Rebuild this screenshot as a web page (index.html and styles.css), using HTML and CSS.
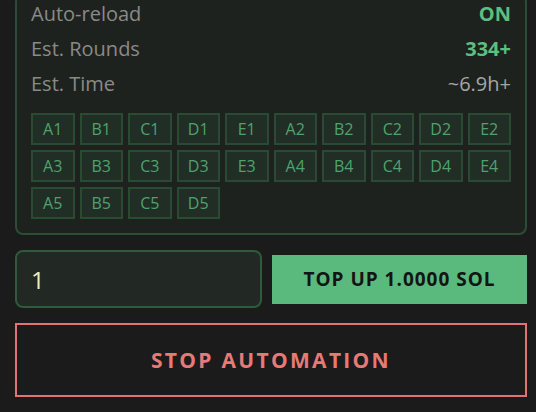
FILE: index.html
```html
<!DOCTYPE html>
<html>
<head>
<meta charset="utf-8">
<link rel="stylesheet" href="styles.css">
</head>
<body>
<div class="page">
  <section class="panel">
    <div class="row"><span class="label">Auto-reload</span><span class="value green">ON</span></div>
    <div class="row"><span class="label">Est. Rounds</span><span class="value green">334+</span></div>
    <div class="row"><span class="label">Est. Time</span><span class="value muted">~6.9h+</span></div>
    <div class="cells">
      <span class="cell">A1</span><span class="cell">B1</span><span class="cell">C1</span><span class="cell">D1</span><span class="cell">E1</span>
      <span class="cell">A2</span><span class="cell">B2</span><span class="cell">C2</span><span class="cell">D2</span><span class="cell">E2</span>
      <span class="cell">A3</span><span class="cell">B3</span><span class="cell">C3</span><span class="cell">D3</span><span class="cell">E3</span>
      <span class="cell">A4</span><span class="cell">B4</span><span class="cell">C4</span><span class="cell">D4</span><span class="cell">E4</span>
      <span class="cell">A5</span><span class="cell">B5</span><span class="cell">C5</span><span class="cell">D5</span>
    </div>
  </section>
  <div class="topup">
    <input class="amount" type="text" value="1">
    <button class="topup-btn">TOP UP 1.0000 SOL</button>
  </div>
  <button class="stop-btn">STOP AUTOMATION</button>
</div>
</body>
</html>
```
FILE: styles.css
```css
* { box-sizing: border-box; }
html, body {
  margin: 0;
  background: #1b1b1b;
  height: 100%;
  overflow: hidden;
}
body {
  font-family: "Open Sans", "Noto Sans", sans-serif;
}
.page {
  padding: 0 9px 0 15px;
}
.panel {
  margin-top: -6px;
  border: 2px solid #2c4c36;
  border-radius: 8px;
  background: #1e221f;
  padding: 0 14px 14px 14px;
}
.row {
  display: flex;
  justify-content: space-between;
  align-items: center;
  height: 35px;
  font-size: 20px;
}
.label { color: #8a8a86; }
.value { font-weight: 700; }
.green { color: #5cbf80; }
.muted { color: #a6a6a2; font-weight: 400; }
.cells {
  margin-top: 12px;
  display: grid;
  grid-template-columns: repeat(10, 1fr);
  gap: 5px 5px;
}
.cell {
  height: 32px;
  display: flex;
  align-items: center;
  justify-content: center;
  border: 2px solid #2b4a34;
  background: #212e26;
  color: #4fa26d;
  font-size: 16px;
}
.topup {
  margin-top: 15px;
  display: flex;
  align-items: center;
  gap: 10px;
}
.amount {
  width: 247px;
  height: 58px;
  border: 2px solid #2f5a3c;
  border-radius: 8px;
  background: #222823;
  color: #e8efc2;
  font-family: inherit;
  font-weight: 400;
  font-size: 24px;
  padding: 0 14px;
  outline: none;
}
.topup-btn {
  flex: 1;
  height: 49px;
  border: none;
  background: #5aba7e;
  color: #141414;
  font-family: inherit;
  font-weight: 700;
  font-size: 19px;
  letter-spacing: 1px;
}
.stop-btn {
  display: block;
  width: 100%;
  margin-top: 15px;
  height: 74px;
  border: 2px solid #e07474;
  background: transparent;
  color: #e57a78;
  font-family: inherit;
  font-weight: 700;
  font-size: 21px;
  letter-spacing: 2.3px;
}
```
